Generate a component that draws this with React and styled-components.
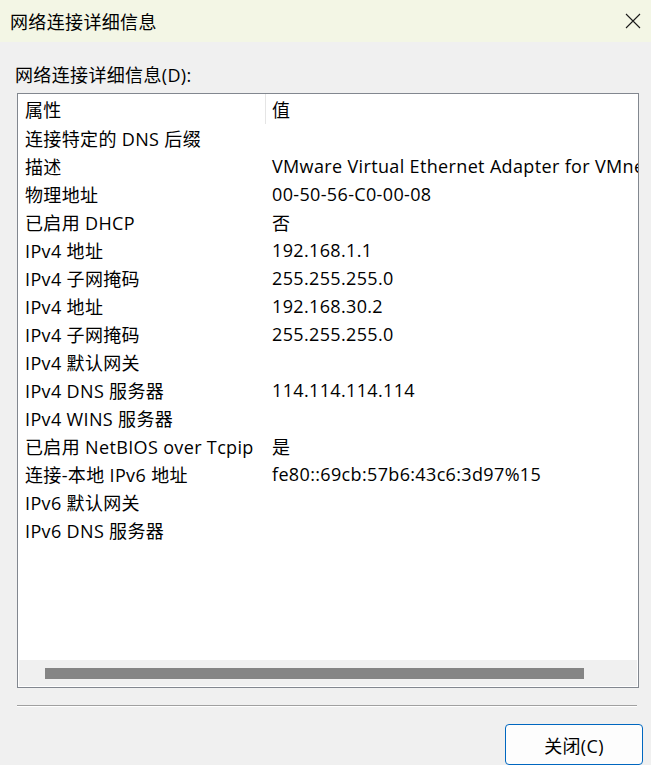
import React from "react";
import styled, { createGlobalStyle } from "styled-components";

const GlobalStyle = createGlobalStyle`
  html, body {
    margin: 0;
    padding: 0;
    background: #f0f0f0;
  }
  body {
    font-family: "Open Sans", "Noto Sans CJK SC", sans-serif;
    letter-spacing: 0.35px;
    color: #000;
  }
`;

const Window = styled.div`
  width: 651px;
  height: 765px;
  background: #f0f0f0;
  display: flex;
  flex-direction: column;
  overflow: hidden;
`;

const TitleBar = styled.div`
  height: 42px;
  flex-shrink: 0;
  background: #f3f6e5;
  display: flex;
  align-items: center;
  justify-content: space-between;
  padding: 0 9px 0 10px;
  font-size: 18px;
`;

const CloseX = styled.svg`
  width: 16px;
  height: 16px;
  margin-right: 1px;
`;

const Body = styled.div`
  padding: 21px 0 0 15px;
  display: flex;
  flex-direction: column;
`;

const Label = styled.div`
  font-size: 18px;
  line-height: 24px;
`;

const ListBox = styled.div`
  margin: 6px 0 0 2px;
  width: 622px;
  height: 595px;
  box-sizing: border-box;
  border: 1px solid #82878f;
  background: #fff;
  display: flex;
  flex-direction: column;
  overflow: hidden;
`;

const Rows = styled.div`
  flex: 1;
  overflow: hidden;
`;

const Row = styled.div`
  display: grid;
  grid-template-columns: 247px 1fr;
  height: ${(p) => (p.$header ? 30 : 28)}px;
  align-items: center;
  font-size: 18px;
  white-space: nowrap;
`;

const Cell = styled.div`
  padding-left: ${(p) => (p.$divider ? 6 : 7)}px;
  overflow: hidden;
  height: 100%;
  display: flex;
  align-items: center;
  border-left: ${(p) => (p.$divider ? "1px solid #e5e5e5" : "none")};
  box-sizing: border-box;
`;

const HScroll = styled.div`
  height: 26px;
  background: #f0f0f0;
  margin: 0 1px 1px;
  display: flex;
  align-items: center;
  padding-left: 26px;
`;

const Thumb = styled.div`
  width: 539px;
  height: 11px;
  background: #858585;
`;

const Separator = styled.div`
  margin: 17px 0 0 2px;
  width: 620px;
  height: 1px;
  background: #a0a0a0;
  border-bottom: 1px solid #fff;
`;

const Footer = styled.div`
  display: flex;
  justify-content: flex-end;
  padding: 17px 8px 0 0;
`;

const Button = styled.button`
  width: 138px;
  height: 41px;
  box-sizing: border-box;
  border: 1px solid #0067c0;
  border-radius: 4px;
  background: #fdfdfd;
  font-family: "Open Sans", "Noto Sans CJK SC", sans-serif;
  letter-spacing: 0.35px;
  font-size: 18px;
  color: #000;
  padding: 0;
`;

const data = [
  ["连接特定的 DNS 后缀", ""],
  ["描述", "VMware Virtual Ethernet Adapter for VMnet8"],
  ["物理地址", "00-50-56-C0-00-08"],
  ["已启用 DHCP", "否"],
  ["IPv4 地址", "192.168.1.1"],
  ["IPv4 子网掩码", "255.255.255.0"],
  ["IPv4 地址", "192.168.30.2"],
  ["IPv4 子网掩码", "255.255.255.0"],
  ["IPv4 默认网关", ""],
  ["IPv4 DNS 服务器", "114.114.114.114"],
  ["IPv4 WINS 服务器", ""],
  ["已启用 NetBIOS over Tcpip", "是"],
  ["连接-本地 IPv6 地址", "fe80::69cb:57b6:43c6:3d97%15"],
  ["IPv6 默认网关", ""],
  ["IPv6 DNS 服务器", ""],
];

export default function App() {
  return (
    <Window>
      <GlobalStyle />
      <TitleBar>
        <span>网络连接详细信息</span>
        <CloseX viewBox="0 0 16 16">
          <path d="M1 1 L15 15 M15 1 L1 15" stroke="#1a1a1a" strokeWidth="1.1" fill="none" />
        </CloseX>
      </TitleBar>
      <Body>
        <Label>网络连接详细信息(D):</Label>
        <ListBox>
          <Rows>
            <Row $header>
              <Cell>属性</Cell>
              <Cell $divider>值</Cell>
            </Row>
            {data.map(([k, v], i) => (
              <Row key={i}>
                <Cell>{k}</Cell>
                <Cell>{v}</Cell>
              </Row>
            ))}
          </Rows>
          <HScroll>
            <Thumb />
          </HScroll>
        </ListBox>
        <Separator />
      </Body>
      <Footer>
        <Button>关闭(C)</Button>
      </Footer>
    </Window>
  );
}
